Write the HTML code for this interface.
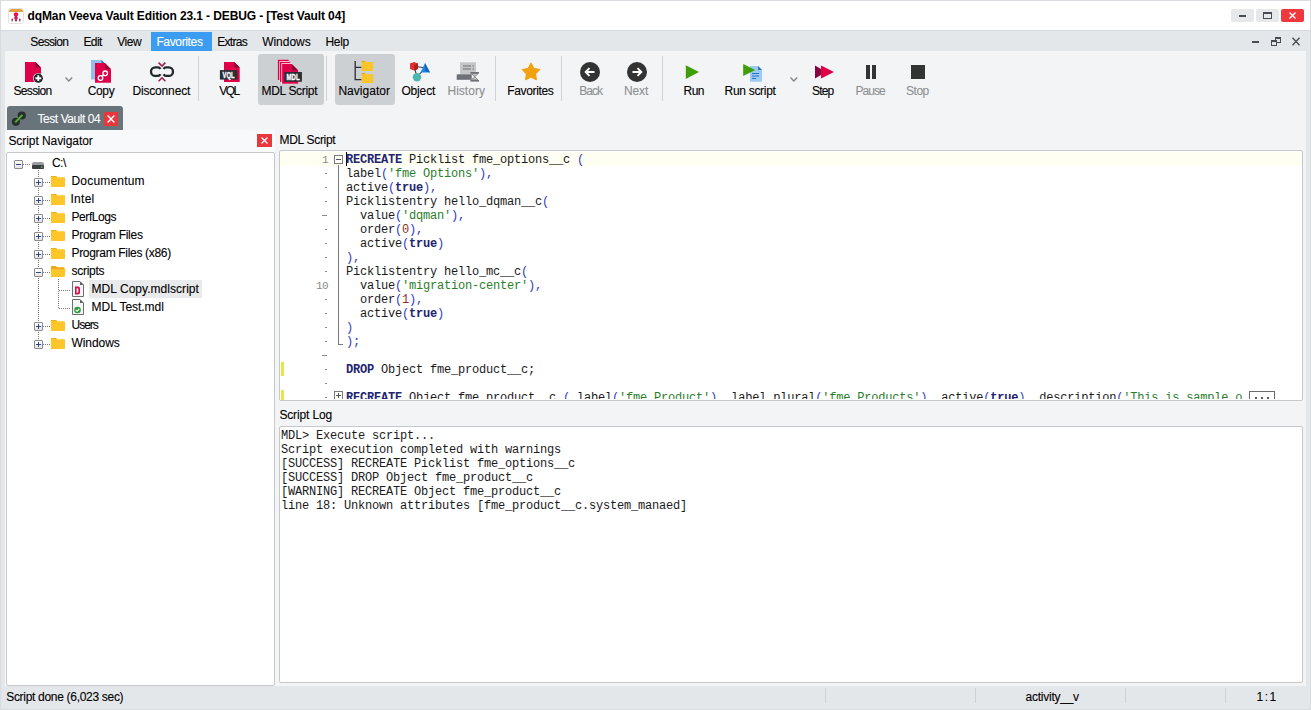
<!DOCTYPE html>
<html><head><meta charset="utf-8">
<style>
*{margin:0;padding:0;box-sizing:border-box}
html,body{width:1311px;height:710px;overflow:hidden;background:#e4e7ea;font-family:"Liberation Sans",sans-serif;font-size:12px;color:#000}
.a{position:absolute}
.t{position:absolute;white-space:nowrap;line-height:14px;font-size:12px;-webkit-text-stroke:0.1px currentColor}
.cl{position:absolute;left:346px;white-space:pre;font-family:"Liberation Mono",monospace;font-size:12px;line-height:14px;letter-spacing:-0.2px;color:#1a1a1a}
.ln{position:absolute;left:316px;width:12px;text-align:right;font-family:"Liberation Mono",monospace;font-size:11px;line-height:14px;color:#8a8a8a;letter-spacing:-0.5px}
.sep{position:absolute;top:56px;width:1px;height:45px;background:#d0d3d6}
svg{position:absolute;overflow:visible}
</style></head><body>
<!-- window frame -->
<div class="a" style="left:0;top:0;width:1311px;height:30px;background:#fff;border-top:1px solid #d9dcdf;border-left:1px solid #d9dcdf;border-right:1px solid #d9dcdf"></div>

<!-- app icon -->
<svg style="left:8px;top:8px" width="16" height="16" viewBox="0 0 16 16">
<rect x="0.5" y="0.5" width="15" height="15" rx="2.5" fill="#fff" stroke="#e2e2e2"/>
<path d="M1 4 Q1 1 3.5 1 L12.5 1 Q15 1 15 4 Z" fill="#e2a244"/>
<ellipse cx="8" cy="6.5" rx="2.2" ry="2.2" fill="#e0105a"/>
<ellipse cx="8" cy="10" rx="1.8" ry="2" fill="#d81058"/>
<ellipse cx="8" cy="12.5" rx="1" ry="1" fill="#901040"/>
<rect x="3.5" y="10.5" width="1.5" height="3" rx="0.7" fill="#a04060"/>
<rect x="11" y="10.5" width="1.5" height="3" rx="0.7" fill="#a04060"/>
</svg>
<!-- window buttons -->
<div class="a" style="left:1231px;top:9px;width:23px;height:13px;background:#e6e8ea;border-radius:2px"></div>
<div class="a" style="left:1239px;top:15px;width:7px;height:2px;background:#474d54"></div>
<div class="a" style="left:1256px;top:9px;width:23px;height:13px;background:#e6e8ea;border-radius:2px"></div>
<div class="a" style="left:1263px;top:12px;width:9px;height:7px;border:1px solid #474d54;border-top-width:2px"></div>
<div class="a" style="left:1281px;top:9px;width:23px;height:13px;background:#ef383e;border-radius:2px"></div>
<svg style="left:1289px;top:12px" width="7" height="7" viewBox="0 0 7 7"><path d="M0.5 0.5 L6.5 6.5 M6.5 0.5 L0.5 6.5" stroke="#fff" stroke-width="1.4"/></svg>

<!-- menu bar -->
<div class="a" style="left:0;top:30px;width:1311px;height:21px;background:#e4e7ea;border-left:1px solid #d9dcdf;border-top:1px solid #d6d9dc"></div>
<div class="a" style="left:151px;top:32px;width:61px;height:19px;background:#3c9cf2"></div>
<!-- mdi buttons -->
<div class="a" style="left:1252px;top:41px;width:7px;height:2px;background:#474d54"></div>
<div class="a" style="left:1275px;top:37px;width:6px;height:6px;border:1px solid #474d54;border-top-width:2px"></div>
<div class="a" style="left:1271px;top:40px;width:6px;height:6px;border:1px solid #474d54;border-top-width:2px;background:#e4e7ea"></div>
<svg style="left:1292px;top:37px" width="8" height="9" viewBox="0 0 8 9"><path d="M0.5 0.8 L7.5 8.2 M7.5 0.8 L0.5 8.2" stroke="#4a4f55" stroke-width="1.4"/></svg>

<!-- toolbar + body bg -->
<div class="a" style="left:5px;top:51px;width:1301px;height:635px;background:#f3f4f6"></div>
<div class="a" style="left:1306px;top:51px;width:5px;height:635px;background:#e4e7ea"></div>
<div class="a" style="left:0;top:51px;width:1px;height:659px;background:#d9dcdf"></div>
<div class="a" style="left:1310px;top:0;width:1px;height:710px;background:#d9dcdf"></div>

<!-- toolbar highlights -->
<div class="a" style="left:258px;top:54px;width:66px;height:51px;background:#cdd0d3;border-radius:3px"></div>
<div class="a" style="left:335px;top:54px;width:60px;height:51px;background:#cdd0d3;border-radius:3px"></div>
<div class="sep" style="left:198px"></div>
<div class="sep" style="left:326px"></div>
<div class="sep" style="left:495px"></div>
<div class="sep" style="left:561px"></div>
<div class="sep" style="left:662px"></div>

<!-- Session icon -->
<svg style="left:25px;top:62px" width="20" height="22" viewBox="0 0 20 22">
<path d="M0 0 H10.5 L16 5.5 V20 H0 Z" fill="#e0004a"/>
<path d="M10.5 0 L16 5.5 H10.5 Z" fill="#8a0035"/>
<circle cx="13.3" cy="16.2" r="5.3" fill="#f3f4f6"/>
<circle cx="13.3" cy="16.2" r="4.6" fill="#23262b"/>
<path d="M13.3 13.3 V19.1 M10.4 16.2 H16.2" stroke="#fff" stroke-width="1.9"/>
</svg>
<svg style="left:65px;top:77px" width="8" height="5" viewBox="0 0 8 5"><path d="M0.5 0.5 L3.8 4 L7.2 0.5" fill="none" stroke="#80868b" stroke-width="1.3"/></svg>
<!-- Copy icon -->
<svg style="left:91px;top:60px" width="21" height="23" viewBox="0 0 21 23">
<path d="M0 0 H10.4 L14 3.5 V19.6 H0 Z" fill="#8fc0ec"/>
<path d="M10.4 0 L14 3.5 H10.4 Z" fill="#3a6ab8"/>
<path d="M4 3 H13.8 L20 9.2 V22.7 H4 Z" fill="#e0004a"/>
<path d="M13.8 3 L20 9.2 H13.8 Z" fill="#a0003c"/>
<circle cx="9.5" cy="18" r="2.3" fill="none" stroke="#fff" stroke-width="1.3"/>
<circle cx="14.2" cy="13.3" r="2.3" fill="none" stroke="#fff" stroke-width="1.3"/>
<path d="M10.8 16.4 L12.8 14.8" stroke="#fff" stroke-width="1.3"/>
</svg>
<!-- Disconnect icon -->
<svg style="left:149px;top:61px" width="26" height="22" viewBox="0 0 26 22">
<path d="M11.4 8 Q10.6 6.4 9 6.4 H6.25 A4.25 4.25 0 0 0 6.25 14.9 H9 Q10.6 14.9 11.4 13.3" fill="none" stroke="#23262b" stroke-width="2.3"/>
<path d="M14.6 8 Q15.4 6.4 17 6.4 H19.75 A4.25 4.25 0 0 1 19.75 14.9 H17 Q15.4 14.9 14.6 13.3" fill="none" stroke="#23262b" stroke-width="2.3"/>
<path d="M9.6 1.6 L13 5 L16.4 1.6" fill="none" stroke="#9b2150" stroke-width="1.6"/>
<path d="M9.6 20.2 L13 16.8 L16.4 20.2" fill="none" stroke="#9b2150" stroke-width="1.6"/>
</svg>
<!-- VQL icon -->
<svg style="left:219px;top:62px" width="22" height="20" viewBox="0 0 22 20">
<path d="M5 0 H15.3 L20.7 5.4 V20 H5 Z" fill="#e0004a"/>
<path d="M15.3 0 L20.7 5.4 H15.3 Z" fill="#8a0035"/>
<rect x="0.9" y="8.1" width="17.6" height="9.5" fill="#2a2d33"/>
<text x="3.6" y="16.1" textLength="12" lengthAdjust="spacingAndGlyphs" font-family="Liberation Sans" font-weight="bold" font-size="9" fill="#fff" stroke="#fff" stroke-width="0.35">VQL</text>
</svg>
<!-- MDL icon -->
<svg style="left:277px;top:59px" width="26" height="26" viewBox="0 0 26 26">
<path d="M0.9 0.8 H11 L14.5 4.3 V21 H0.9 Z" fill="#e0004a"/>
<path d="M2.3 2.3 H12.3 L16.5 6.5 V23 H2.3 Z" fill="#fff"/>
<path d="M2.9 3 H12.5 L16.5 7 V23 H2.9 Z" fill="#e0004a"/>
<path d="M4.4 4.3 H14.6 L21.1 10.8 V24.8 H4.4 Z" fill="#fff"/>
<path d="M5.1 5 H14.8 L21.1 11.3 V24.8 H5.1 Z" fill="#e0004a"/>
<path d="M14.8 5 L21.1 11.3 H14.8 Z" fill="#8a0035"/>
<rect x="7.4" y="13" width="17.5" height="9.8" fill="#2a2d33"/>
<text x="9.6" y="21.2" textLength="13" lengthAdjust="spacingAndGlyphs" font-family="Liberation Sans" font-weight="bold" font-size="9" fill="#fff" stroke="#fff" stroke-width="0.35">MDL</text>
</svg>
<!-- Navigator icon -->
<svg style="left:354px;top:60px" width="21" height="24" viewBox="0 0 21 24">
<path d="M1.2 1 V19.6 H7.5 M1.2 7.4 H7.5" fill="none" stroke="#2a2d33" stroke-width="1.3"/>
<path d="M7.7 1 H11 L12 2 H19.2 V11 H7.7 Z" fill="#fac52a"/>
<path d="M7.7 13.2 H11 L12 14.2 H19.2 V23 H7.7 Z" fill="#fac52a"/>
<rect x="7.7" y="0.8" width="3.3" height="1.2" fill="#e0a820"/>
<rect x="7.7" y="13" width="3.3" height="1.2" fill="#e0a820"/>
</svg>
<!-- Object icon -->
<svg style="left:409px;top:61px" width="22" height="22" viewBox="0 0 22 22">
<path d="M5 5 L16 7 M5 5 L8 16 M8 16 L16 7" stroke="#3a3f44" stroke-width="1.1"/>
<path d="M1 2.5 L5 1 L9 2.5 V8 L5 9.5 L1 8 Z" fill="#e03030"/>
<path d="M5 4 L9 2.5 V8 L5 9.5 Z" fill="#b02020"/>
<path d="M16 2 L21 11.5 H11.5 Z" fill="#1e88e5"/>
<path d="M16 2 L21 11.5 L16 10 Z" fill="#1565c0"/>
<circle cx="8" cy="16.2" r="4.2" fill="#4db6ac"/>
</svg>
<!-- History icon -->
<svg style="left:456px;top:62px" width="24" height="20" viewBox="0 0 24 20">
<rect x="4" y="0.3" width="16" height="12" fill="#c4c6c8"/>
<path d="M7 4 H15 M7 7 H15 M16.5 4 H18 M16.5 7 H18" stroke="#6d7074" stroke-width="1"/>
<rect x="0.7" y="12.3" width="15" height="5.5" fill="#6d7074"/>
<rect x="14.4" y="10" width="8.6" height="1.6" fill="#6d7074"/>
<rect x="14.4" y="18" width="8.6" height="1.6" fill="#6d7074"/>
<path d="M15.4 11.6 H22 L18.7 14.8 Z M15.4 18 H22 L18.7 14.8 Z" fill="#c4c6c8" stroke="#6d7074" stroke-width="0.8"/>
</svg>
<!-- Favorites star -->
<svg style="left:521px;top:62px" width="20" height="19" viewBox="0 0 20 19">
<path d="M10.00 1.30 L12.76 6.50 L18.56 7.52 L14.47 11.75 L15.29 17.58 L10.00 15.00 L4.71 17.58 L5.53 11.75 L1.44 7.52 L7.24 6.50 Z" fill="#f2a10f" stroke="#f2a10f" stroke-width="1.3" stroke-linejoin="round"/>
</svg>
<!-- Back / Next -->
<svg style="left:580px;top:62px" width="20" height="20" viewBox="0 0 20 20">
<circle cx="10" cy="10" r="10" fill="#333"/>
<path d="M14.5 10 H6 M9.5 6.2 L5.7 10 L9.5 13.8" fill="none" stroke="#fff" stroke-width="1.9"/>
</svg>
<svg style="left:627px;top:62px" width="20" height="20" viewBox="0 0 20 20">
<circle cx="10" cy="10" r="10" fill="#333"/>
<path d="M5.5 10 H14 M10.5 6.2 L14.3 10 L10.5 13.8" fill="none" stroke="#fff" stroke-width="1.9"/>
</svg>
<!-- Run -->
<svg style="left:685px;top:65px" width="15" height="15" viewBox="0 0 15 15"><path d="M0.8 0.2 L14 7 L0.8 13.9 Z" fill="#3f9c0a"/></svg>
<!-- Run script -->
<svg style="left:743px;top:64px" width="20" height="18" viewBox="0 0 20 18">
<path d="M7 2 H15 L19 6 V17.7 H7 Z" fill="#9bcaf4"/>
<path d="M15 2 L19 6 H15 Z" fill="#2a6fc0"/>
<path d="M9 9.5 H16 M9 12 H16 M9 14.5 H13" stroke="#2a6fc0" stroke-width="1"/>
<path d="M0.2 0 L12.2 6 L0.2 12 Z" fill="#3f9c0a"/>
</svg>
<svg style="left:790px;top:77px" width="8" height="5" viewBox="0 0 8 5"><path d="M0.5 0.5 L3.8 4 L7.2 0.5" fill="none" stroke="#80868b" stroke-width="1.3"/></svg>
<!-- Step -->
<svg style="left:815px;top:65px" width="20" height="14" viewBox="0 0 20 14">
<path d="M0 0.4 L11 7 L0 13.6 Z" fill="#8b0040"/>
<path d="M6 0.4 L19 7 L6 13.6 Z" fill="#e0004a"/>
</svg>
<!-- Pause / Stop -->
<div class="a" style="left:866px;top:65px;width:4px;height:14px;background:#333"></div>
<div class="a" style="left:872px;top:65px;width:4px;height:14px;background:#333"></div>
<div class="a" style="left:911px;top:65px;width:14px;height:14px;background:#333"></div>

<!-- tab -->
<div class="a" style="left:7px;top:106px;width:116px;height:24px;background:#68737a;border-radius:3px 3px 0 0"></div>
<svg style="left:11px;top:111px" width="15" height="15" viewBox="0 0 15 15">
<circle cx="4.9" cy="10.8" r="4.1" fill="#2a2d30"/>
<circle cx="10.8" cy="4.5" r="4.1" fill="#2a2d30"/>
<path d="M4.2 11.4 L11.4 3.9" stroke="#52b22a" stroke-width="2"/>
</svg>
<div class="a" style="left:104px;top:112px;width:14px;height:14px;background:#e9383d"></div>
<svg style="left:107px;top:115px" width="8" height="8" viewBox="0 0 8 8"><path d="M0.6 0.6 L7.4 7.4 M7.4 0.6 L0.6 7.4" stroke="#fff" stroke-width="1.4"/></svg>

<!-- left panel -->
<div class="a" style="left:5px;top:130px;width:270px;height:556px;background:#f8f9fa"></div>
<div class="a" style="left:257px;top:134px;width:15px;height:13px;background:#e9383d"></div>
<svg style="left:261px;top:137px" width="7" height="7" viewBox="0 0 7 7"><path d="M0.5 0.5 L6.5 6.5 M6.5 0.5 L0.5 6.5" stroke="#fff" stroke-width="1.3"/></svg>
<div class="a" style="left:6px;top:152px;width:269px;height:534px;background:#fff;border:1px solid #c6c8ca;border-radius:2px"></div>

<!-- tree lines -->
<svg style="left:0;top:0" width="280" height="360" viewBox="0 0 280 360">
<g stroke="#7a7a7a" stroke-width="1" stroke-dasharray="1 1" fill="none">
<path d="M23 164.5 H30"/>
<path d="M38.5 170 V345"/>
<path d="M43 182.5 H50 M43 200.5 H50 M43 218.5 H50 M43 236.5 H50 M43 254.5 H50 M43 272.5 H50 M43 326.5 H50 M43 344.5 H50"/>
<path d="M58.5 279 V308.5"/>
<path d="M59 290.5 H70 M59 308.5 H70"/>
</g>
</svg>
<!-- expander boxes -->
<div class="a" style="left:14px;top:160px;width:9px;height:9px;border:1px solid #8c8c8c;background:linear-gradient(#fff,#e4e4e4);border-radius:1px"></div>
<div class="a" style="left:16px;top:164px;width:5px;height:1px;background:#294a8a"></div>

<svg style="left:32px;top:162px" width="12" height="7" viewBox="0 0 12 7"><rect x="0" y="0" width="12" height="7" rx="2" fill="#9a9c9e"/><rect x="0" y="3" width="12" height="4" rx="1" fill="#3c3f42"/><rect x="9" y="4.5" width="1.5" height="1.2" fill="#5ed05e"/></svg>
<div class="a" style="left:34px;top:178px;width:9px;height:9px;border:1px solid #8c8c8c;background:linear-gradient(#fff,#e4e4e4);border-radius:1px"></div><div class="a" style="left:36px;top:182px;width:5px;height:1px;background:#294a8a"></div><div class="a" style="left:38px;top:180px;width:1px;height:5px;background:#294a8a"></div>
<svg style="left:51px;top:176px" width="14" height="11" viewBox="0 0 14 11"><path d="M0 0.5 Q0 0 0.5 0 H5 L6.2 1.3 H13.5 Q14 1.3 14 1.8 V10.5 Q14 11 13.5 11 H0.5 Q0 11 0 10.5 Z" fill="#ffc629"/><path d="M0 0.5 Q0 0 0.5 0 H5 L6.2 1.3 H0 Z" fill="#f0b019"/></svg>
<div class="a" style="left:34px;top:196px;width:9px;height:9px;border:1px solid #8c8c8c;background:linear-gradient(#fff,#e4e4e4);border-radius:1px"></div><div class="a" style="left:36px;top:200px;width:5px;height:1px;background:#294a8a"></div><div class="a" style="left:38px;top:198px;width:1px;height:5px;background:#294a8a"></div>
<svg style="left:51px;top:194px" width="14" height="11" viewBox="0 0 14 11"><path d="M0 0.5 Q0 0 0.5 0 H5 L6.2 1.3 H13.5 Q14 1.3 14 1.8 V10.5 Q14 11 13.5 11 H0.5 Q0 11 0 10.5 Z" fill="#ffc629"/><path d="M0 0.5 Q0 0 0.5 0 H5 L6.2 1.3 H0 Z" fill="#f0b019"/></svg>
<div class="a" style="left:34px;top:214px;width:9px;height:9px;border:1px solid #8c8c8c;background:linear-gradient(#fff,#e4e4e4);border-radius:1px"></div><div class="a" style="left:36px;top:218px;width:5px;height:1px;background:#294a8a"></div><div class="a" style="left:38px;top:216px;width:1px;height:5px;background:#294a8a"></div>
<svg style="left:51px;top:212px" width="14" height="11" viewBox="0 0 14 11"><path d="M0 0.5 Q0 0 0.5 0 H5 L6.2 1.3 H13.5 Q14 1.3 14 1.8 V10.5 Q14 11 13.5 11 H0.5 Q0 11 0 10.5 Z" fill="#ffc629"/><path d="M0 0.5 Q0 0 0.5 0 H5 L6.2 1.3 H0 Z" fill="#f0b019"/></svg>
<div class="a" style="left:34px;top:232px;width:9px;height:9px;border:1px solid #8c8c8c;background:linear-gradient(#fff,#e4e4e4);border-radius:1px"></div><div class="a" style="left:36px;top:236px;width:5px;height:1px;background:#294a8a"></div><div class="a" style="left:38px;top:234px;width:1px;height:5px;background:#294a8a"></div>
<svg style="left:51px;top:230px" width="14" height="11" viewBox="0 0 14 11"><path d="M0 0.5 Q0 0 0.5 0 H5 L6.2 1.3 H13.5 Q14 1.3 14 1.8 V10.5 Q14 11 13.5 11 H0.5 Q0 11 0 10.5 Z" fill="#ffc629"/><path d="M0 0.5 Q0 0 0.5 0 H5 L6.2 1.3 H0 Z" fill="#f0b019"/></svg>
<div class="a" style="left:34px;top:250px;width:9px;height:9px;border:1px solid #8c8c8c;background:linear-gradient(#fff,#e4e4e4);border-radius:1px"></div><div class="a" style="left:36px;top:254px;width:5px;height:1px;background:#294a8a"></div><div class="a" style="left:38px;top:252px;width:1px;height:5px;background:#294a8a"></div>
<svg style="left:51px;top:248px" width="14" height="11" viewBox="0 0 14 11"><path d="M0 0.5 Q0 0 0.5 0 H5 L6.2 1.3 H13.5 Q14 1.3 14 1.8 V10.5 Q14 11 13.5 11 H0.5 Q0 11 0 10.5 Z" fill="#ffc629"/><path d="M0 0.5 Q0 0 0.5 0 H5 L6.2 1.3 H0 Z" fill="#f0b019"/></svg>
<div class="a" style="left:34px;top:268px;width:9px;height:9px;border:1px solid #8c8c8c;background:linear-gradient(#fff,#e4e4e4);border-radius:1px"></div><div class="a" style="left:36px;top:272px;width:5px;height:1px;background:#294a8a"></div>
<svg style="left:51px;top:266px" width="15" height="11" viewBox="0 0 15 11"><path d="M0 0.5 Q0 0 0.5 0 H5 L6.2 1.3 H13 Q13.5 1.3 13.5 1.8 V10.5 H0 Z" fill="#eea81c"/><path d="M0.3 3.2 H14.6 L13.6 10.6 Q13.5 11 13 11 H0.5 Q0 11 0 10.5 Z" fill="#ffc629"/></svg>
<div class="a" style="left:34px;top:322px;width:9px;height:9px;border:1px solid #8c8c8c;background:linear-gradient(#fff,#e4e4e4);border-radius:1px"></div><div class="a" style="left:36px;top:326px;width:5px;height:1px;background:#294a8a"></div><div class="a" style="left:38px;top:324px;width:1px;height:5px;background:#294a8a"></div>
<svg style="left:51px;top:320px" width="14" height="11" viewBox="0 0 14 11"><path d="M0 0.5 Q0 0 0.5 0 H5 L6.2 1.3 H13.5 Q14 1.3 14 1.8 V10.5 Q14 11 13.5 11 H0.5 Q0 11 0 10.5 Z" fill="#ffc629"/><path d="M0 0.5 Q0 0 0.5 0 H5 L6.2 1.3 H0 Z" fill="#f0b019"/></svg>
<div class="a" style="left:34px;top:340px;width:9px;height:9px;border:1px solid #8c8c8c;background:linear-gradient(#fff,#e4e4e4);border-radius:1px"></div><div class="a" style="left:36px;top:344px;width:5px;height:1px;background:#294a8a"></div><div class="a" style="left:38px;top:342px;width:1px;height:5px;background:#294a8a"></div>
<svg style="left:51px;top:338px" width="14" height="11" viewBox="0 0 14 11"><path d="M0 0.5 Q0 0 0.5 0 H5 L6.2 1.3 H13.5 Q14 1.3 14 1.8 V10.5 Q14 11 13.5 11 H0.5 Q0 11 0 10.5 Z" fill="#ffc629"/><path d="M0 0.5 Q0 0 0.5 0 H5 L6.2 1.3 H0 Z" fill="#f0b019"/></svg>
<svg style="left:72px;top:281px" width="12" height="16" viewBox="0 0 12 16"><path d="M0.5 0.5 H8 L11.5 4 V15.5 H0.5 Z" fill="#f3f5f7" stroke="#6a7075"/><path d="M8 0.5 L11.5 4 H8 Z" fill="#5a6065"/><path d="M3 5.5 H6 Q8 5.5 8 7.5 V11.5 Q8 13.5 6 13.5 H3 Z M4.6 7.2 V11.8 H5.6 Q6.3 11.8 6.3 11 V8 Q6.3 7.2 5.6 7.2 Z" fill="#d8104a" fill-rule="evenodd"/></svg>
<svg style="left:72px;top:299px" width="12" height="16" viewBox="0 0 12 16"><path d="M0.5 0.5 H8 L11.5 4 V15.5 H0.5 Z" fill="#f3f5f7" stroke="#6a7075"/><path d="M8 0.5 L11.5 4 H8 Z" fill="#5a6065"/><circle cx="5.5" cy="11" r="3.3" fill="#2e9a3a"/><path d="M3.8 11 L5.1 12.3 L7.3 9.8" fill="none" stroke="#fff" stroke-width="1.1"/></svg>

<div class="a" style="left:89px;top:280px;width:113px;height:18px;background:#e9eaeb"></div>

<!-- editor -->
<div class="a" style="left:279px;top:150px;width:24px;height:0"></div>
<div class="a" style="left:279px;top:150px;width:1024px;height:251px;background:#fff;border:1px solid #c6c8ca;border-radius:2px;overflow:hidden">
  <div class="a" style="left:0;top:1px;width:1022px;height:14px;background:#fefef2"></div>
</div>
<div class="ln" style="top:153px">1</div>
<div class="a" style="left:325px;top:173px;width:2px;height:1px;background:#8a8a8a"></div>
<div class="a" style="left:325px;top:187px;width:2px;height:1px;background:#8a8a8a"></div>
<div class="a" style="left:325px;top:201px;width:2px;height:1px;background:#8a8a8a"></div>
<div class="a" style="left:322px;top:215px;width:5px;height:1px;background:#8a8a8a"></div>
<div class="a" style="left:325px;top:229px;width:2px;height:1px;background:#8a8a8a"></div>
<div class="a" style="left:325px;top:243px;width:2px;height:1px;background:#8a8a8a"></div>
<div class="a" style="left:325px;top:257px;width:2px;height:1px;background:#8a8a8a"></div>
<div class="a" style="left:325px;top:271px;width:2px;height:1px;background:#8a8a8a"></div>
<div class="ln" style="top:279px">10</div>
<div class="a" style="left:325px;top:299px;width:2px;height:1px;background:#8a8a8a"></div>
<div class="a" style="left:325px;top:313px;width:2px;height:1px;background:#8a8a8a"></div>
<div class="a" style="left:325px;top:327px;width:2px;height:1px;background:#8a8a8a"></div>
<div class="a" style="left:325px;top:341px;width:2px;height:1px;background:#8a8a8a"></div>
<div class="a" style="left:322px;top:355px;width:5px;height:1px;background:#8a8a8a"></div>
<div class="a" style="left:325px;top:369px;width:2px;height:1px;background:#8a8a8a"></div>
<div class="a" style="left:325px;top:383px;width:2px;height:1px;background:#8a8a8a"></div>
<div class="a" style="left:325px;top:397px;width:2px;height:1px;background:#8a8a8a"></div>
<div class="a" style="left:334px;top:155px;width:9px;height:9px;border:1px solid #7a7a7a;background:#fff"></div>
<div class="a" style="left:336px;top:159px;width:5px;height:1px;background:#555"></div>
<div class="a" style="left:338px;top:165px;width:1px;height:180px;background:#7a7a7a"></div>
<div class="a" style="left:338px;top:344px;width:5px;height:1px;background:#7a7a7a"></div>
<div class="a" style="left:346px;top:152px;width:1px;height:14px;background:#000"></div>
<div class="a" style="left:281px;top:362px;width:3px;height:14px;background:#e6e64a"></div>
<div class="a" style="left:281px;top:390px;width:3px;height:10px;background:#e6e64a"></div>
<div class="a" style="left:279px;top:150px;width:1024px;height:249px;overflow:hidden">
  <div class="a" style="left:-279px;top:-150px;width:1311px;height:710px">
<div class="cl" style="top:153px"><span style="color:#1e2470;font-weight:bold">RECREATE</span> Picklist fme_options__c <span style="color:#2f3bbb">(</span></div>
<div class="cl" style="top:167px">label<span style="color:#2f3bbb">(</span><span style="color:#2b7d2b">&#x27;fme Options&#x27;</span><span style="color:#2f3bbb">),</span></div>
<div class="cl" style="top:181px">active<span style="color:#2f3bbb">(</span><span style="color:#1e2470;font-weight:bold">true</span><span style="color:#2f3bbb">),</span></div>
<div class="cl" style="top:195px">Picklistentry hello_dqman__c<span style="color:#2f3bbb">(</span></div>
<div class="cl" style="top:209px">  value<span style="color:#2f3bbb">(</span><span style="color:#2b7d2b">&#x27;dqman&#x27;</span><span style="color:#2f3bbb">),</span></div>
<div class="cl" style="top:223px">  order<span style="color:#2f3bbb">(</span><span style="color:#8f2f1f">0</span><span style="color:#2f3bbb">),</span></div>
<div class="cl" style="top:237px">  active<span style="color:#2f3bbb">(</span><span style="color:#1e2470;font-weight:bold">true</span><span style="color:#2f3bbb">)</span></div>
<div class="cl" style="top:251px"><span style="color:#2f3bbb">),</span></div>
<div class="cl" style="top:265px">Picklistentry hello_mc__c<span style="color:#2f3bbb">(</span></div>
<div class="cl" style="top:279px">  value<span style="color:#2f3bbb">(</span><span style="color:#2b7d2b">&#x27;migration-center&#x27;</span><span style="color:#2f3bbb">),</span></div>
<div class="cl" style="top:293px">  order<span style="color:#2f3bbb">(</span><span style="color:#8f2f1f">1</span><span style="color:#2f3bbb">),</span></div>
<div class="cl" style="top:307px">  active<span style="color:#2f3bbb">(</span><span style="color:#1e2470;font-weight:bold">true</span><span style="color:#2f3bbb">)</span></div>
<div class="cl" style="top:321px"><span style="color:#2f3bbb">)</span></div>
<div class="cl" style="top:335px"><span style="color:#2f3bbb">);</span></div>
<div class="cl" style="top:349px"></div>
<div class="cl" style="top:363px"><span style="color:#1e2470;font-weight:bold">DROP</span> Object fme_product__c;</div>
<div class="cl" style="top:377px"></div>
<div class="cl" style="top:391px"><span style="color:#1e2470;font-weight:bold">RECREATE</span> Object fme_product__c <span style="color:#2f3bbb">(</span> label<span style="color:#2f3bbb">(</span><span style="color:#2b7d2b">&#x27;fme Product&#x27;</span><span style="color:#2f3bbb">),</span> label_plural<span style="color:#2f3bbb">(</span><span style="color:#2b7d2b">&#x27;fme Products&#x27;</span><span style="color:#2f3bbb">),</span> active<span style="color:#2f3bbb">(</span><span style="color:#1e2470;font-weight:bold">true</span><span style="color:#2f3bbb">),</span> description<span style="color:#2f3bbb">(</span><span style="color:#2b7d2b">&#x27;This is sample o</span></div>
  <div class="a" style="left:334px;top:391px;width:9px;height:9px;border:1px solid #7a7a7a;background:#fff"></div>
  <div class="a" style="left:336px;top:395px;width:5px;height:1px;background:#555"></div>
  <div class="a" style="left:338px;top:393px;width:1px;height:5px;background:#555"></div>
  <div class="a" style="left:1249px;top:391px;width:26px;height:12px;border:1px solid #6a6a6a;background:#fff"></div>
  <div class="a" style="left:1255px;top:397px;width:2px;height:2px;background:#5a5a5a"></div>
  <div class="a" style="left:1261px;top:397px;width:2px;height:2px;background:#5a5a5a"></div>
  <div class="a" style="left:1267px;top:397px;width:2px;height:2px;background:#5a5a5a"></div>
  </div>
</div>

<!-- log -->
<div class="a" style="left:279px;top:426px;width:1024px;height:257px;background:#fff;border:1px solid #c6c8ca;border-radius:2px"></div>
<div class="cl" style="left:281px;top:429px">MDL&gt; Execute script...</div>
<div class="cl" style="left:281px;top:443px">Script execution completed with warnings</div>
<div class="cl" style="left:281px;top:457px">[SUCCESS] RECREATE Picklist fme_options__c</div>
<div class="cl" style="left:281px;top:471px">[SUCCESS] DROP Object fme_product__c</div>
<div class="cl" style="left:281px;top:485px">[WARNING] RECREATE Object fme_product__c</div>
<div class="cl" style="left:281px;top:499px">line 18: Unknown attributes [fme_product__c.system_manaed]</div>


<!-- status bar -->
<div class="a" style="left:0;top:686px;width:1311px;height:24px;background:#e4e7ea;border-left:1px solid #d9dcdf;border-right:1px solid #d9dcdf;border-bottom:1px solid #d9dcdf"></div>
<div class="a" style="left:825px;top:688px;width:1px;height:15px;background:#cfd2d5"></div>
<div class="a" style="left:975px;top:688px;width:1px;height:15px;background:#cfd2d5"></div>
<div class="a" style="left:1125px;top:688px;width:1px;height:15px;background:#cfd2d5"></div>
<div class="a" style="left:1225px;top:688px;width:1px;height:15px;background:#cfd2d5"></div>
<div class="t" style="left:27.50px;top:9px;letter-spacing:-0.112px;font-weight:bold;-webkit-text-stroke:0">dqMan Veeva Vault Edition 23.1 - DEBUG - [Test Vault 04]</div>
<div class="t" style="left:30.30px;top:35px;letter-spacing:-0.670px">Session</div>
<div class="t" style="left:83.40px;top:35px;letter-spacing:-0.581px">Edit</div>
<div class="t" style="left:117.20px;top:35px;letter-spacing:-0.442px">View</div>
<div class="t" style="left:156.40px;top:35px;letter-spacing:-0.356px;color:#fff">Favorites</div>
<div class="t" style="left:217.30px;top:35px;letter-spacing:-0.722px">Extras</div>
<div class="t" style="left:262.20px;top:35px;letter-spacing:-0.030px">Windows</div>
<div class="t" style="left:325.40px;top:35px;letter-spacing:-0.302px">Help</div>
<div class="t" style="left:13.40px;top:84px;letter-spacing:-0.636px">Session</div>
<div class="t" style="left:87.70px;top:84px;letter-spacing:-0.338px">Copy</div>
<div class="t" style="left:132.40px;top:84px;letter-spacing:-0.159px">Disconnect</div>
<div class="t" style="left:219.20px;top:84px;letter-spacing:-1.469px">VQL</div>
<div class="t" style="left:261.50px;top:84px;letter-spacing:-0.323px">MDL Script</div>
<div class="t" style="left:338.40px;top:84px;letter-spacing:0.042px">Navigator</div>
<div class="t" style="left:401.40px;top:84px;letter-spacing:-0.150px">Object</div>
<div class="t" style="left:447.50px;top:84px;letter-spacing:0.011px;color:#8d9093">History</div>
<div class="t" style="left:507.30px;top:84px;letter-spacing:-0.356px">Favorites</div>
<div class="t" style="left:579.30px;top:84px;letter-spacing:-0.993px;color:#8d9093">Back</div>
<div class="t" style="left:624.10px;top:84px;letter-spacing:-0.180px;color:#8d9093">Next</div>
<div class="t" style="left:683.50px;top:84px;letter-spacing:-0.520px">Run</div>
<div class="t" style="left:724.60px;top:84px;letter-spacing:-0.309px">Run script</div>
<div class="t" style="left:812.10px;top:84px;letter-spacing:-0.837px">Step</div>
<div class="t" style="left:855.50px;top:84px;letter-spacing:-0.988px;color:#8d9093">Pause</div>
<div class="t" style="left:906.10px;top:84px;letter-spacing:-0.504px;color:#8d9093">Stop</div>
<div class="t" style="left:37.50px;top:112px;letter-spacing:-0.443px;color:#fff">Test Vault 04</div>
<div class="t" style="left:8.40px;top:134px;letter-spacing:-0.065px">Script Navigator</div>
<div class="t" style="left:279.60px;top:133px;letter-spacing:-0.323px">MDL Script</div>
<div class="t" style="left:279.40px;top:408px;letter-spacing:-0.139px">Script Log</div>
<div class="t" style="left:52.00px;top:156px;letter-spacing:-0.550px">C:\</div>
<div class="t" style="left:71.50px;top:174px;letter-spacing:0.182px">Documentum</div>
<div class="t" style="left:70.50px;top:192px;letter-spacing:0.271px">Intel</div>
<div class="t" style="left:71.50px;top:210px;letter-spacing:-0.418px">PerfLogs</div>
<div class="t" style="left:71.50px;top:228px;letter-spacing:-0.274px">Program Files</div>
<div class="t" style="left:71.50px;top:246px;letter-spacing:-0.315px">Program Files (x86)</div>
<div class="t" style="left:71.50px;top:264px;letter-spacing:-0.262px">scripts</div>
<div class="t" style="left:91.60px;top:282px;letter-spacing:0.035px">MDL Copy.mdlscript</div>
<div class="t" style="left:91.60px;top:300px;letter-spacing:-0.044px">MDL Test.mdl</div>
<div class="t" style="left:71.50px;top:318px;letter-spacing:-1.009px">Users</div>
<div class="t" style="left:71.50px;top:336px;letter-spacing:-0.063px">Windows</div>
<div class="t" style="left:6.20px;top:690px;letter-spacing:-0.303px">Script done (6,023 sec)</div>
<div class="t" style="left:1025.60px;top:690px;letter-spacing:-0.252px">activity__v</div>
<div class="t" style="left:1256.60px;top:690px;letter-spacing:-0.944px">1 : 1</div>
</body></html>
